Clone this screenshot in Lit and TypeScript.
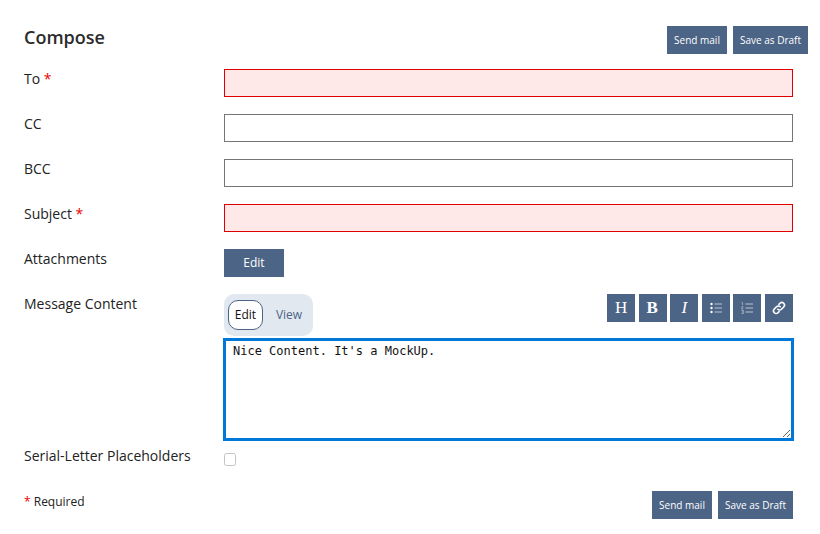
import { LitElement, html, css } from 'lit';
import { customElement } from 'lit/decorators.js';

@customElement('app-root')
export class AppRoot extends LitElement {
  static styles = css`
    :host {
      display: block;
      width: 820px;
      height: 534px;
      box-sizing: border-box;
      padding: 26px 12px 0 24px;
      background: #fff;
      color: #222;
      font-family: 'Open Sans', 'Noto Sans', sans-serif;
      font-size: 14px;
      line-height: 20px;
    }
    * {
      box-sizing: border-box;
    }
    .header {
      display: flex;
      justify-content: space-between;
      align-items: flex-start;
      height: 28px;
      margin-bottom: 15px;
    }
    h1 {
      margin: 0;
      font-size: 18px;
      font-weight: 600;
      line-height: 22px;
      color: #2b2b2b;
    }
    .actions {
      display: flex;
      gap: 6px;
    }
    .btn {
      display: block;
      height: 28px;
      padding: 0;
      border: 0;
      border-radius: 0;
      background: #4c6485;
      color: #fff;
      font: 10px/28px 'Open Sans', 'Noto Sans', sans-serif;
      text-align: center;
      white-space: nowrap;
    }
    .send {
      width: 60px;
    }
    .draft {
      width: 75px;
    }
    .form {
      width: 769px;
      display: flex;
      flex-direction: column;
    }
    .row {
      display: grid;
      grid-template-columns: 200px 569px;
      margin-bottom: 17px;
    }
    label {
      line-height: 20px;
    }
    .req {
      color: #f00000;
    }
    input.text {
      display: block;
      width: 100%;
      height: 28px;
      margin: 0;
      border: 1px solid #767676;
      background: #fff;
      outline: none;
    }
    input.invalid {
      border-color: #e00000;
      background: #ffe8e8;
    }
    .edit-btn {
      width: 60px;
      font-size: 12px;
    }
    .message {
      margin-bottom: 0;
    }
    .toolbar {
      display: flex;
      justify-content: space-between;
      align-items: flex-start;
      height: 44px;
    }
    .tabs {
      display: flex;
      align-items: center;
      width: 89px;
      height: 42px;
      padding: 0 4px;
      border-radius: 10px;
      background: #e2e8f0;
      font-size: 12px;
    }
    .tab {
      height: 30px;
      line-height: 28px;
      text-align: center;
      color: #4c6485;
    }
    .tab.on {
      width: 35px;
      border: 1px solid #4c6485;
      border-radius: 10px;
      background: #fff;
      color: #111;
    }
    .tab.off {
      flex: 1;
      padding-left: 6px;
      line-height: 30px;
    }
    .icons {
      display: flex;
      gap: 3.6px;
    }
    .icon {
      display: flex;
      align-items: center;
      justify-content: center;
      width: 28px;
      height: 28px;
      padding: 0;
      border: 0;
      background: #4c6485;
      color: #fff;
      font: 17px/28px 'Liberation Serif', serif;
    }
    .icon.bold {
      font-weight: 700;
      padding-right: 1px;
    }
    .icon.italic {
      font-style: italic;
    }
    .icon svg {
      display: block;
    }
    textarea {
      display: block;
      width: 571px;
      height: 103px;
      margin: 0 0 0 -1px;
      padding: 2px 7px;
      border: 3px solid #0078d7;
      border-radius: 0;
      outline: none;
      background: #fff;
      color: #111;
      font: 12px/16px 'DejaVu Sans Mono', monospace;
    }
    .serial {
      height: 45px;
      margin: 5px 0 0;
    }
    .check {
      display: block;
      width: 12px;
      height: 13px;
      margin: 7px 0 0;
      border: 1px solid #c4c4c4;
      border-radius: 2.5px;
      background: #fff;
    }
    .footer {
      display: flex;
      justify-content: space-between;
      align-items: flex-start;
    }
    .footnote {
      font-size: 12px;
      line-height: 22px;
    }
  `;

  render() {
    return html`
      <div class="header">
        <h1>Compose</h1>
        <div class="actions">
          <button class="btn send">Send mail</button>
          <button class="btn draft">Save as Draft</button>
        </div>
      </div>
      <div class="form">
        <div class="row">
          <label>To <span class="req">*</span></label>
          <input class="text invalid" />
        </div>
        <div class="row">
          <label>CC</label>
          <input class="text" />
        </div>
        <div class="row">
          <label>BCC</label>
          <input class="text" />
        </div>
        <div class="row">
          <label>Subject <span class="req">*</span></label>
          <input class="text invalid" />
        </div>
        <div class="row">
          <label>Attachments</label>
          <div><button class="btn edit-btn">Edit</button></div>
        </div>
        <div class="row message">
          <label>Message Content</label>
          <div>
            <div class="toolbar">
              <div class="tabs">
                <div class="tab on">Edit</div>
                <div class="tab off">View</div>
              </div>
              <div class="icons">
                <button class="icon">H</button>
                <button class="icon bold">B</button>
                <button class="icon italic">I</button>
                <button class="icon">
                  <svg width="12" height="12" viewBox="0 0 12 12" fill="none" stroke="#fff">
                    <circle cx="1.500" cy="2" r="1.200" fill="#fff" stroke="none" />
                    <circle cx="1.500" cy="6" r="1.200" fill="#fff" stroke="none" />
                    <circle cx="1.500" cy="10" r="1.200" fill="#fff" stroke="none" />
                    <path d="M4.500 2H12M4.500 6H12M4.500 10H12" stroke-width=".8" opacity=".8" />
                  </svg>
                </button>
                <button class="icon">
                  <svg width="12" height="12" viewBox="0 0 12 12" fill="none" stroke="#fff">
                    <path d="M.5.600h1v2.600M.3 4.800h1.900L.4 7h1.900M.4 8.500h1.900v3H.4M1 10h1.300" stroke-width=".6" opacity=".7" />
                    <path d="M4.500 2H12M4.500 6H12M4.500 10H12" stroke-width=".8" opacity=".8" />
                  </svg>
                </button>
                <button class="icon">
                  <svg width="16" height="16" viewBox="0 0 16 16" fill="none" stroke="#fff" stroke-width="1.600" stroke-linecap="round">
                    <path d="M6.800 9.200a2.600 2.600 0 0 0 3.700 0l2.200-2.200a2.600 2.600 0 0 0-3.700-3.700L7.900 4.400" />
                    <path d="M9.200 6.800a2.600 2.600 0 0 0-3.700 0L3.300 9a2.600 2.600 0 0 0 3.700 3.700l1.100-1.100" />
                  </svg>
                </button>
              </div>
            </div>
            <textarea>Nice Content. It's a MockUp.</textarea>
          </div>
        </div>
        <div class="row serial">
          <label>Serial-Letter Placeholders</label>
          <div><div class="check"></div></div>
        </div>
        <div class="footer">
          <div class="footnote"><span class="req">*</span> Required</div>
          <div class="actions">
            <button class="btn send">Send mail</button>
            <button class="btn draft">Save as Draft</button>
          </div>
        </div>
      </div>
    `;
  }
}
